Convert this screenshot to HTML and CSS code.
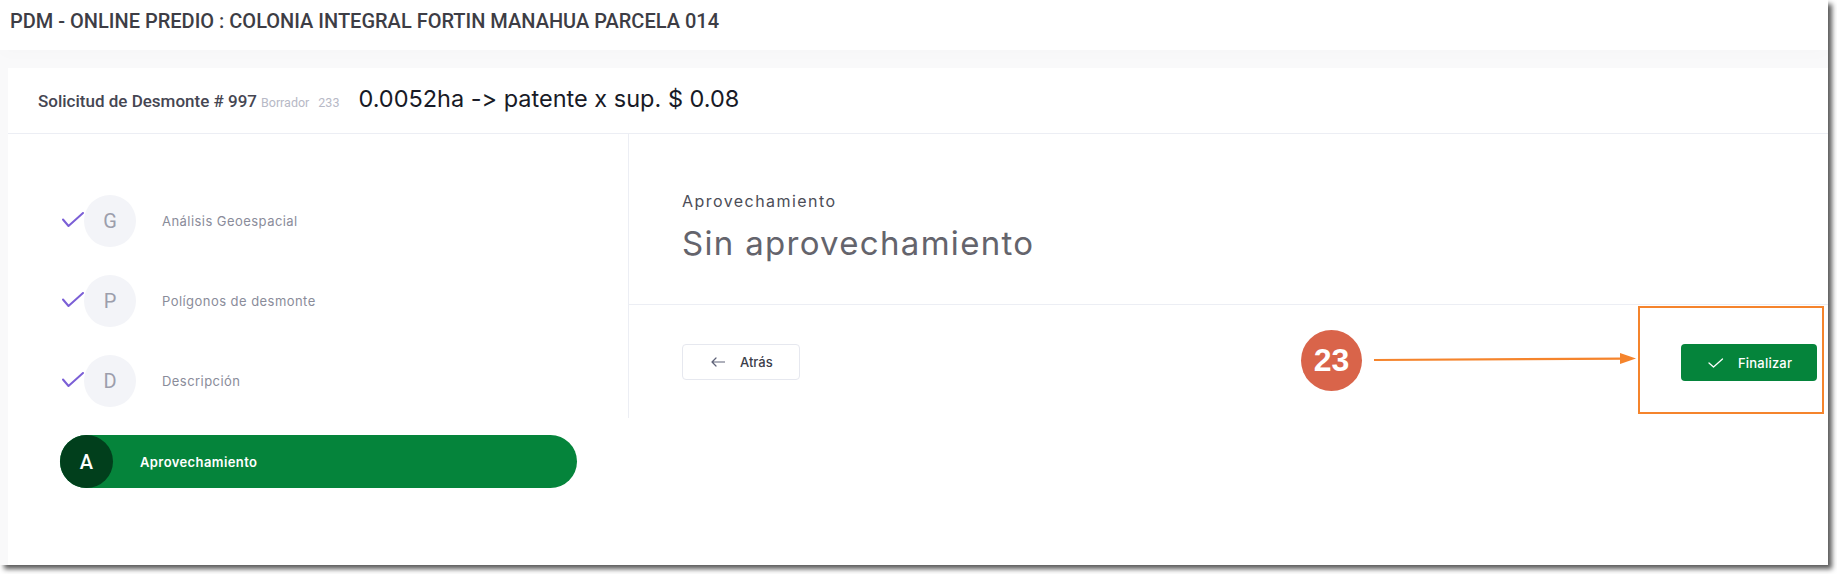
FILE: index.html
```html
<!DOCTYPE html>
<html lang="es">
<head>
<meta charset="utf-8">
<title>PDM - Solicitud de Desmonte</title>
<link rel="stylesheet" href="styles.css">
</head>
<body>
<div class="screen">
  <header class="topbar">
    <h1 class="page-title">PDM - ONLINE PREDIO : COLONIA INTEGRAL FORTIN MANAHUA PARCELA 014</h1>
  </header>
  <main class="content">
    <section class="card">
      <div class="card-header">
        <span class="req-title">Solicitud de Desmonte # 997</span>
        <span class="req-status">Borrador</span>
        <span class="req-id">233</span>
        <span class="req-summary">0.0052ha -&gt; patente x sup. $ 0.08</span>
      </div>
      <div class="card-body">
        <nav class="steps">
          <div class="step done">
            <svg class="step-check" width="22" height="16" viewBox="0 0 22 16"><path d="M1 7.5 L6.5 14 L21 1" fill="none" stroke="#7b5fd6" stroke-width="2" stroke-linecap="round" stroke-linejoin="round"/></svg>
            <span class="step-circle">G</span>
            <span class="step-label">Análisis Geoespacial</span>
          </div>
          <div class="step done">
            <svg class="step-check" width="22" height="16" viewBox="0 0 22 16"><path d="M1 7.5 L6.5 14 L21 1" fill="none" stroke="#7b5fd6" stroke-width="2" stroke-linecap="round" stroke-linejoin="round"/></svg>
            <span class="step-circle">P</span>
            <span class="step-label">Polígonos de desmonte</span>
          </div>
          <div class="step done">
            <svg class="step-check" width="22" height="16" viewBox="0 0 22 16"><path d="M1 7.5 L6.5 14 L21 1" fill="none" stroke="#7b5fd6" stroke-width="2" stroke-linecap="round" stroke-linejoin="round"/></svg>
            <span class="step-circle">D</span>
            <span class="step-label">Descripción</span>
          </div>
          <div class="step active">
            <span class="step-circle">A</span>
            <span class="step-label">Aprovechamiento</span>
          </div>
        </nav>
        <div class="panel">
          <div class="panel-head">
            <div class="panel-label">Aprovechamiento</div>
            <div class="panel-value">Sin aprovechamiento</div>
          </div>
          <div class="panel-foot">
            <button class="btn btn-back" type="button">
              <svg width="14" height="10" viewBox="0 0 14 10"><path d="M13.5 5 H1 M5 1 L1 5 L5 9" fill="none" stroke="#5e6278" stroke-width="1.2" stroke-linecap="round" stroke-linejoin="round"/></svg>
              <span>Atrás</span>
            </button>
            <button class="btn btn-finish" type="button">
              <svg width="16" height="10" viewBox="0 0 16 10"><path d="M1 5 L5.5 9 L14.5 1" fill="none" stroke="#ffffff" stroke-width="1.3" stroke-linecap="round" stroke-linejoin="round"/></svg>
              <span>Finalizar</span>
            </button>
          </div>
        </div>
      </div>
    </section>
  </main>
  <div class="annot-badge">23</div>
  <svg class="annot-arrow" width="268" height="18" viewBox="0 0 268 18"><line x1="2" y1="10" x2="252" y2="8.6" stroke="#f5842c" stroke-width="2.2"/><polygon points="248,3 264,8.5 248,14" fill="#f5842c"/></svg>
  <div class="annot-box"></div>
</div>
</body>
</html>
```
FILE: styles.css
```css
* { box-sizing: border-box; }

html {
  margin: 0;
  padding: 0;
  background: #ffffff;
}

body {
  margin: 0;
  padding: 0 9px 9px 0;
  width: 1837px;
  height: 574px;
  background: #ffffff;
}

.screen {
  position: relative;
  width: 1828px;
  height: 565px;
  overflow: hidden;
  display: flex;
  flex-direction: column;
  background: #f9f9fa;
  box-shadow: 4px 4px 5px rgba(0, 0, 0, 0.65);
}

.topbar {
  flex: none;
  height: 50px;
  background: #ffffff;
  padding: 9px 0 0 10px;
  position: relative;
  z-index: 1;
  box-shadow: 0 6px 14px rgba(0, 0, 0, 0.012);
}

.page-title {
  margin: 0;
  font-family: Roboto, "Liberation Sans", sans-serif;
  font-weight: 500;
  font-size: 20px;
  line-height: 24px;
  color: #3d3d45;
}

.content {
  flex: 1;
  padding: 18px 0 0 8px;
  display: flex;
}

.card {
  flex: 1;
  background: #ffffff;
}

.card-header {
  height: 66px;
  border-bottom: 1px solid #eceef4;
  display: flex;
  align-items: baseline;
  padding: 18px 0 0 30px;
}

.req-title {
  font-family: Roboto, "Liberation Sans", sans-serif;
  font-weight: 500;
  font-size: 17px;
  color: #454652;
}

.req-status {
  margin-left: 4px;
  font-family: Roboto, "Liberation Sans", sans-serif;
  font-size: 12.5px;
  color: #b7b9c6;
}

.req-id {
  margin-left: 9px;
  font-family: Roboto, "Liberation Sans", sans-serif;
  font-size: 12.5px;
  color: #b7b9c6;
}

.req-summary {
  margin-left: 19px;
  font-family: Inter, "Noto Sans", sans-serif;
  font-size: 23.5px;
  line-height: 26px;
  color: #181a26;
  font-variant-ligatures: no-contextual;
  font-feature-settings: "calt" 0;
}

.card-body {
  display: flex;
  height: 284px;
}

.steps {
  flex: none;
  width: 621px;
  border-right: 1px solid #eceef4;
  padding: 61px 0 0 52px;
  display: flex;
  flex-direction: column;
  gap: 28px;
}

.step {
  display: flex;
  align-items: center;
  height: 52px;
  font-family: Inter, "Noto Sans", sans-serif;
}

.step.done {
  padding-left: 2px;
}

.step-check {
  flex: none;
  margin-top: -2px;
}

.step-circle {
  flex: none;
  width: 52px;
  height: 52px;
  border-radius: 50%;
  display: flex;
  align-items: center;
  justify-content: center;
  font-family: Roboto, "Liberation Sans", sans-serif;
  font-size: 20px;
}

.step.done .step-circle {
  background: #f3f4f8;
  color: #9c9eac;
}

.step-label {
  font-size: 13px;
  letter-spacing: 0.45px;
}

.step.done .step-label {
  margin-left: 26px;
  color: #8a8c9a;
}

.step.active {
  width: 517px;
  height: 53px;
  border-radius: 27px;
  background: #05843b;
}

.step.active .step-circle {
  width: 53px;
  height: 53px;
  background: #013f1c;
  color: #ffffff;
  font-weight: 500;
  font-size: 20px;
}

.step.active .step-label {
  margin-left: 27px;
  color: #ffffff;
  font-weight: 600;
  letter-spacing: 0.4px;
}

.panel {
  flex: 1;
  display: flex;
  flex-direction: column;
}

.panel-head {
  height: 171px;
  border-bottom: 1px solid #eceef4;
  padding: 57px 0 0 53px;
  font-family: Inter, "Noto Sans", sans-serif;
}

.panel-label {
  font-size: 16px;
  line-height: 20px;
  letter-spacing: 1.45px;
  color: #4c4d57;
}

.panel-value {
  margin-top: 12px;
  font-size: 33px;
  line-height: 41px;
  letter-spacing: 1.3px;
  color: #64646c;
}

.panel-foot {
  flex: 1;
  display: flex;
  justify-content: space-between;
  align-items: flex-start;
  padding: 39px 11px 0 53px;
}

.btn {
  display: flex;
  align-items: center;
  border-radius: 4px;
  font-family: Inter, "Noto Sans", sans-serif;
  font-size: 13px;
  font-weight: 500;
  cursor: pointer;
}

.btn-back {
  width: 118px;
  height: 36px;
  padding: 0 0 0 28px;
  gap: 15px;
  background: #ffffff;
  border: 1px solid #e6e8ef;
  color: #3b3d4a;
}

.btn-finish {
  width: 136px;
  height: 37px;
  padding: 0 0 0 27px;
  gap: 14px;
  background: #05843b;
  border: none;
  color: #ffffff;
  letter-spacing: 0.2px;
}

.annot-badge {
  position: absolute;
  left: 1301px;
  top: 330px;
  width: 61px;
  height: 61px;
  border-radius: 50%;
  background: #d9644a;
  color: #ffffff;
  font-family: "Liberation Sans", Arial, sans-serif;
  font-weight: 700;
  font-size: 32px;
  display: flex;
  align-items: center;
  justify-content: center;
}

.annot-arrow {
  position: absolute;
  left: 1372px;
  top: 350px;
}

.annot-box {
  position: absolute;
  left: 1638px;
  top: 306px;
  width: 186px;
  height: 108px;
  border: 2px solid #f5842c;
}
```
